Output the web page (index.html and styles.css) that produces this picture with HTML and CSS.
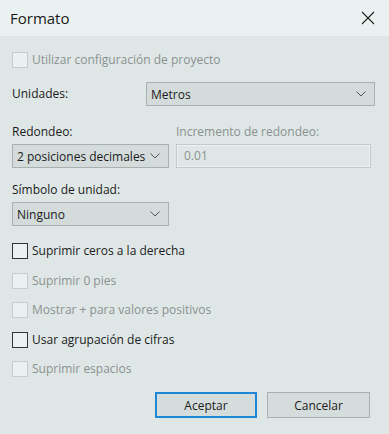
FILE: index.html
```html
<!DOCTYPE html>
<html lang="es">
<head>
    <meta charset="UTF-8">
    <title>Formato</title>
    <link rel="stylesheet" href="styles.css">
</head>
<body>
    <div class="dialog">
        <header class="titlebar">
            <span class="title">Formato</span>
            <svg class="close" width="14" height="14" viewBox="0 0 14 14">
                <path d="M1 1 L13 13 M13 1 L1 13" stroke="#222" stroke-width="1.1" fill="none"/>
            </svg>
        </header>

        <div class="content">
            <label class="check disabled first">
                <span class="box"></span>
                <span>Utilizar configuración de proyecto</span>
            </label>

            <div class="units-row">
                <span class="label">Unidades:</span>
                <div class="select wide">
                    <span>Metros</span>
                    <svg class="chev" width="10" height="6" viewBox="0 0 10 6"><path d="M0.5 0.5 L5 5 L9.5 0.5" stroke="#555" fill="none"/></svg>
                </div>
            </div>

            <div class="pair labels">
                <span class="label col">Redondeo:</span>
                <span class="label muted">Incremento de redondeo:</span>
            </div>
            <div class="pair">
                <div class="select narrow">
                    <span>2 posiciones decimales</span>
                    <svg class="chev" width="10" height="6" viewBox="0 0 10 6"><path d="M0.5 0.5 L5 5 L9.5 0.5" stroke="#555" fill="none"/></svg>
                </div>
                <div class="textbox">0.01</div>
            </div>

            <span class="label symbol">Símbolo de unidad:</span>
            <div class="select narrow">
                <span>Ninguno</span>
                <svg class="chev" width="10" height="6" viewBox="0 0 10 6"><path d="M0.5 0.5 L5 5 L9.5 0.5" stroke="#555" fill="none"/></svg>
            </div>

            <div class="checks">
                <label class="check"><span class="box"></span><span>Suprimir ceros a la derecha</span></label>
                <label class="check disabled"><span class="box"></span><span>Suprimir 0 pies</span></label>
                <label class="check disabled"><span class="box"></span><span>Mostrar + para valores positivos</span></label>
                <label class="check"><span class="box"></span><span>Usar agrupación de cifras</span></label>
                <label class="check disabled"><span class="box"></span><span>Suprimir espacios</span></label>
            </div>

            <div class="buttons">
                <button class="btn primary">Aceptar</button>
                <button class="btn">Cancelar</button>
            </div>
        </div>
    </div>
</body>
</html>
```

FILE: styles.css
```css
body {
    margin: 0;
    font-family: "Open Sans", "Liberation Sans", sans-serif;
    font-size: 12px;
    color: #1b1b1b;
    background-color: #dfe7e6;
}

.dialog {
    width: 389px;
    height: 434px;
    background-color: #dfe7e6;
}

.titlebar {
    height: 36px;
    background-color: #eaf2f1;
    display: flex;
    align-items: center;
    justify-content: space-between;
    padding: 0 14px 0 10px;
    box-sizing: border-box;
}

.title {
    font-size: 15px;
    color: #1a1a1a;
}

.content {
    padding: 16px 14px 0 12px;
    display: flex;
    flex-direction: column;
}

.label {
    line-height: 16px;
    height: 16px;
}

.muted,
.disabled {
    color: #8b9191;
}

/* Checkboxes */
.check {
    display: flex;
    align-items: center;
    gap: 4px;
    height: 16px;
    line-height: 16px;
}

.box {
    width: 14px;
    height: 14px;
    border: 1px solid #333;
    background-color: #eaf2f1;
}

.check.disabled .box {
    border-color: #c6cdcc;
}

.checks {
    display: flex;
    flex-direction: column;
    gap: 13.5px;
    margin-top: 17px;
}

/* Dropdowns */
.units-row {
    display: flex;
    align-items: center;
    margin-top: 14px;
}

.units-row .label {
    width: 134px;
}

.select {
    height: 24px;
    box-sizing: border-box;
    border: 1px solid #a9b1b0;
    background-color: #d4dcdb;
    display: flex;
    align-items: center;
    justify-content: space-between;
    padding: 0 8px 0 4px;
    white-space: nowrap;
    overflow: hidden;
    flex-shrink: 0;
}

.select.wide {
    width: 229px;
}

.select.narrow {
    width: 157px;
}

.chev {
    flex-shrink: 0;
    margin-left: 4px;
}

.pair {
    display: flex;
    gap: 7px;
}

.pair.labels {
    margin-top: 18px;
    margin-bottom: 4px;
}

.col {
    width: 157px;
}

.textbox {
    width: 195px;
    height: 24px;
    box-sizing: border-box;
    border: 1px solid #c3cbca;
    box-shadow: inset 0 0 0 1px #edf3f2;
    color: #8b9191;
    line-height: 22px;
    padding-left: 7px;
}

.symbol {
    margin-top: 14px;
    margin-bottom: 4px;
}

/* Buttons */
.buttons {
    display: flex;
    justify-content: flex-end;
    gap: 10px;
    margin-top: 15px;
    padding-right: 5px;
}

.btn {
    width: 103px;
    height: 26px;
    font-family: inherit;
    font-size: 12px;
    color: #1b1b1b;
    background-color: #d5dddc;
    border: 1px solid #a9b0b0;
    padding: 0;
}

.btn.primary {
    width: 102px;
    border: 2px solid #1e86d6;
}
```
